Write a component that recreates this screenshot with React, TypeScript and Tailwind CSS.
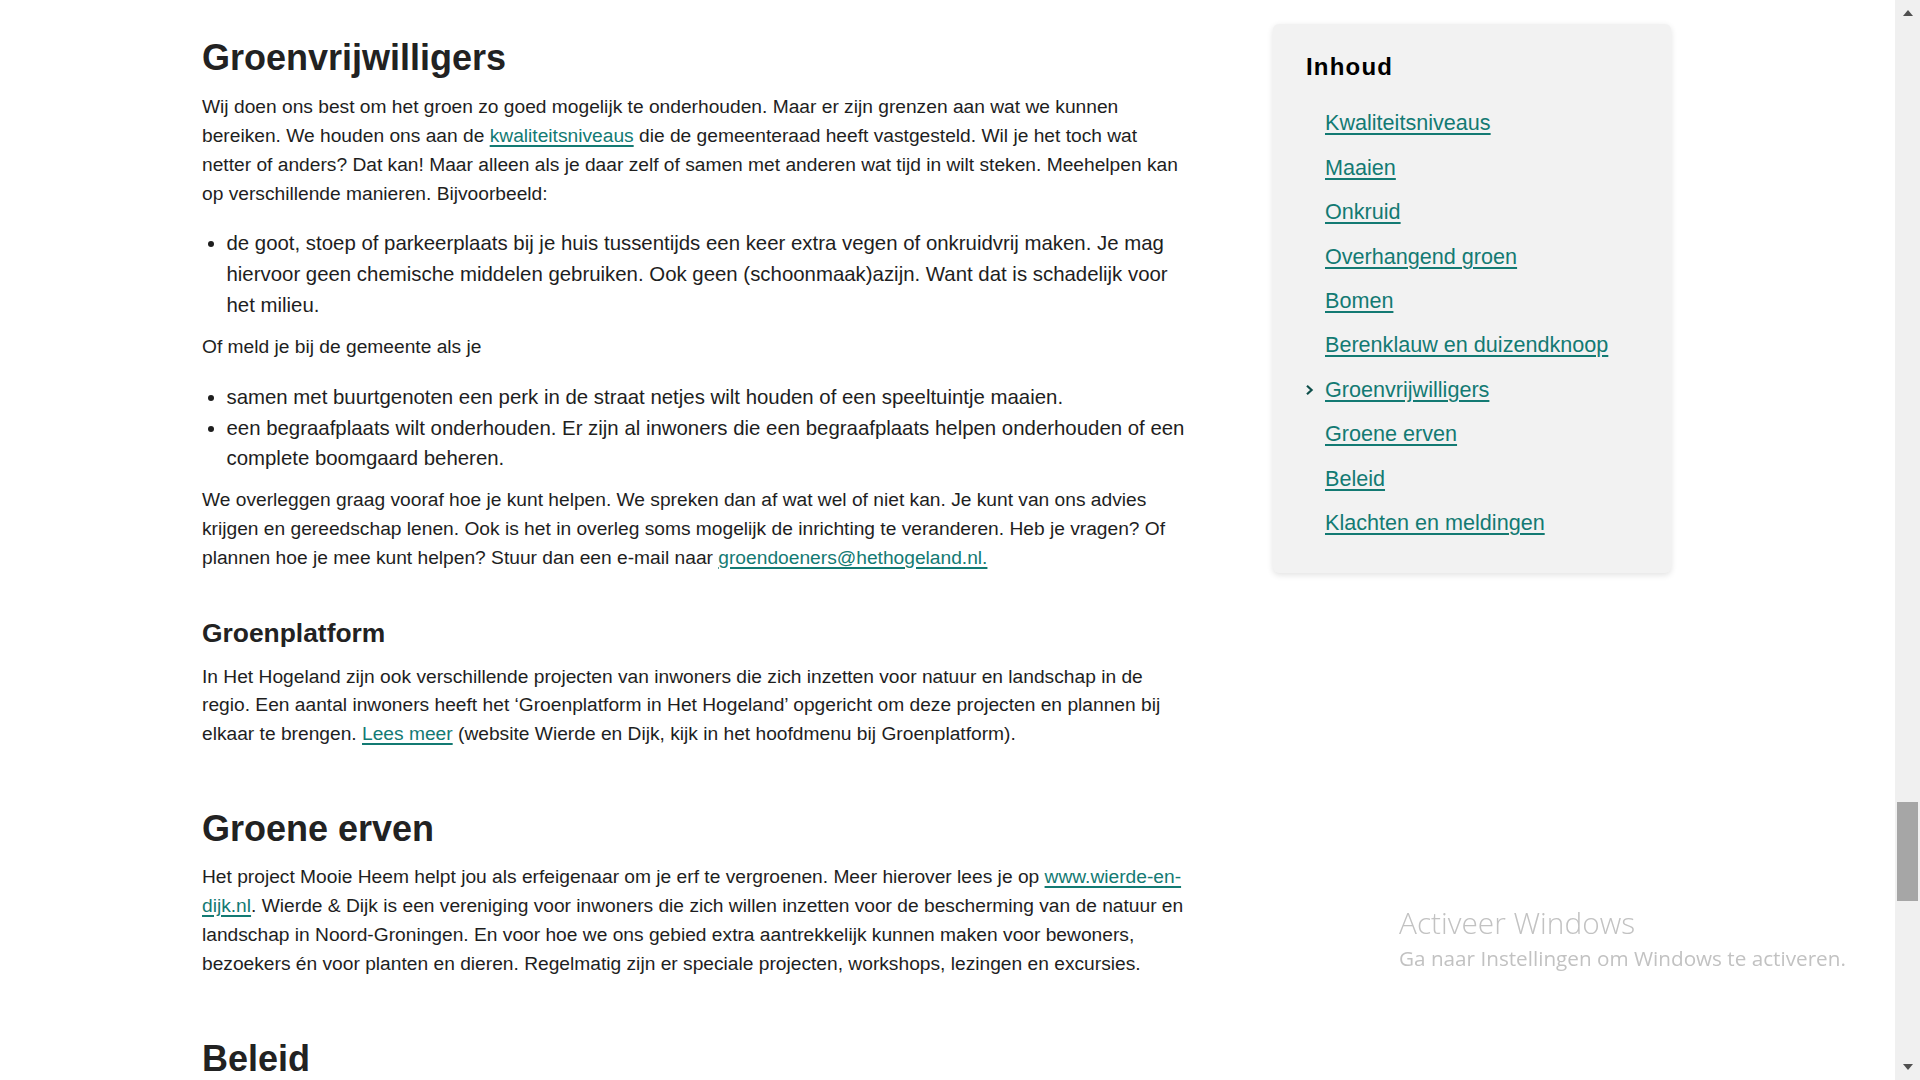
import React from 'react';

const tocItems = [
  'Kwaliteitsniveaus',
  'Maaien',
  'Onkruid',
  'Overhangend groen',
  'Bomen',
  'Berenklauw en duizendknoop',
  'Groenvrijwilligers',
  'Groene erven',
  'Beleid',
  'Klachten en meldingen',
];

const ACTIVE = 'Groenvrijwilligers';

const linkCls = 'text-[#137a73] underline decoration-[1.5px] underline-offset-[3px]';

const Paragraph = ({ className = '', children }: { className?: string; children: React.ReactNode }) => (
  <p className={`text-[19.2px] leading-[28.8px] ${className}`}>{children}</p>
);

const Bullets = ({ className = '', items }: { className?: string; items: string[] }) => (
  <ul className={`list-disc pl-[24.5px] text-[20.4px] leading-[30.6px] ${className}`}>
    {items.map(item => (
      <li key={item}>{item}</li>
    ))}
  </ul>
);

const Chevron = () => (
  <svg width="10" height="14" viewBox="0 0 10 14" className="shrink-0">
    <path d="M2 2.8 L6.6 7 L2 11.2" fill="none" stroke="#0f4f4b" strokeWidth="2.2" />
  </svg>
);

const Sidebar = () => (
  <aside className="w-[398px] shrink-0 self-start mt-[24px] bg-[#f2f2f2] rounded-[6px] shadow-[0_2px_6px_rgba(0,0,0,0.12)] pt-[29px] pb-[28px] pl-[33px] pr-6">
    <h2 className="text-[24px] leading-[28.8px] font-bold tracking-[1.2px] text-black">Inhoud</h2>
    <ul className="mt-[19.5px] text-[21.6px] leading-[44.4px]">
      {tocItems.map(item => (
        <li key={item} className="flex items-center relative pl-[19px]">
          {item === ACTIVE && (
            <span className="absolute left-[-1px] top-[15px]">
              <Chevron />
            </span>
          )}
          <a href="#" className={linkCls}>
            {item}
          </a>
        </li>
      ))}
    </ul>
  </aside>
);

const Scrollbar = () => (
  <div className="fixed top-0 right-0 w-[25px] h-screen bg-[#f0f0f0] flex flex-col items-center">
    <div className="h-[26px] flex items-center justify-center">
      <svg width="10" height="6" viewBox="0 0 10 6">
        <path d="M0 6 L5 0 L10 6 Z" fill="#505050" />
      </svg>
    </div>
    <div className="w-[21px] h-[99px] bg-[#a6a6a6] mt-[776px]" />
    <div className="mt-auto h-[26px] flex items-center justify-center">
      <svg width="10" height="6" viewBox="0 0 10 6">
        <path d="M0 0 L10 0 L5 6 Z" fill="#505050" />
      </svg>
    </div>
  </div>
);

const ActivationNotice = () => (
  <div className="fixed left-[1399px] top-[904px] text-[#c2c2c2] font-['Open_Sans',sans-serif] pointer-events-none">
    <div className="text-[29.8px] leading-[38px] font-light">Activeer Windows</div>
    <div className="text-[20.7px] leading-[28px] mt-[2px]">Ga naar Instellingen om Windows te activeren.</div>
  </div>
);

export default function App() {
  return (
    <div className="h-screen overflow-hidden bg-white text-[#1e1e1e] font-['Liberation_Sans',Arial,sans-serif]">
      <div className="flex gap-[86px] pl-[202px]">
        <main className="w-[985px] shrink-0 pt-[36px]">
          <h2 className="text-[36px] leading-[43.2px] font-bold text-[#222]">Groenvrijwilligers</h2>
          <Paragraph className="mt-[14px]">
            Wij doen ons best om het groen zo goed mogelijk te onderhouden. Maar er zijn grenzen aan wat we kunnen
            bereiken. We houden ons aan de{' '}
            <a href="#" className={linkCls}>
              kwaliteitsniveaus
            </a>{' '}
            die de gemeenteraad heeft vastgesteld. Wil je het toch wat netter of anders? Dat kan! Maar alleen als je
            daar zelf of samen met anderen wat tijd in wilt steken. Meehelpen kan op verschillende manieren.
            Bijvoorbeeld:
          </Paragraph>
          <Bullets
            className="mt-[20px]"
            items={[
              'de goot, stoep of parkeerplaats bij je huis tussentijds een keer extra vegen of onkruidvrij maken. Je mag hiervoor geen chemische middelen gebruiken. Ook geen (schoonmaak)azijn. Want dat is schadelijk voor het milieu.',
            ]}
          />
          <Paragraph className="mt-[12.5px]">Of meld je bij de gemeente als je</Paragraph>
          <Bullets
            className="mt-[20.5px]"
            items={[
              'samen met buurtgenoten een perk in de straat netjes wilt houden of een speeltuintje maaien.',
              'een begraafplaats wilt onderhouden. Er zijn al inwoners die een begraafplaats helpen onderhouden of een complete boomgaard beheren.',
            ]}
          />
          <Paragraph className="mt-[12.5px]">
            We overleggen graag vooraf hoe je kunt helpen. We spreken dan af wat wel of niet kan. Je kunt van ons
            advies krijgen en gereedschap lenen. Ook is het in overleg soms mogelijk de inrichting te veranderen. Heb
            je vragen? Of plannen hoe je mee kunt helpen? Stuur dan een e-mail naar{' '}
            <a href="#" className={linkCls}>
              groendoeners@hethogeland.nl.
            </a>
          </Paragraph>

          <h3 className="mt-[45.6px] text-[26.4px] leading-[31.7px] font-bold text-[#222]">Groenplatform</h3>
          <Paragraph className="mt-[12.7px]">
            In Het Hogeland zijn ook verschillende projecten van inwoners die zich inzetten voor natuur en landschap
            in de regio. Een aantal inwoners heeft het ‘Groenplatform in Het Hogeland’ opgericht om deze projecten en
            plannen bij elkaar te brengen.{' '}
            <a href="#" className={linkCls}>
              Lees meer
            </a>{' '}
            (website Wierde en Dijk, kijk in het hoofdmenu bij Groenplatform).
          </Paragraph>

          <h2 className="mt-[58px] text-[36px] leading-[43.2px] font-bold text-[#222]">Groene erven</h2>
          <Paragraph className="mt-[13px]">
            Het project Mooie Heem helpt jou als erfeigenaar om je erf te vergroenen. Meer hierover lees je op{' '}
            <a href="#" className={linkCls}>
              www.wierde-en-dijk.nl
            </a>
            . Wierde &amp; Dijk is een vereniging voor inwoners die zich willen inzetten voor de bescherming van de
            natuur en landschap in Noord-Groningen. En voor hoe we ons gebied extra aantrekkelijk kunnen maken voor
            bewoners, bezoekers én voor planten en dieren. Regelmatig zijn er speciale projecten, workshops, lezingen
            en excursies.
          </Paragraph>

          <h2 className="mt-[59px] text-[36px] leading-[43.2px] font-bold text-[#222]">Beleid</h2>
        </main>
        <Sidebar />
      </div>
      <ActivationNotice />
      <Scrollbar />
    </div>
  );
}
